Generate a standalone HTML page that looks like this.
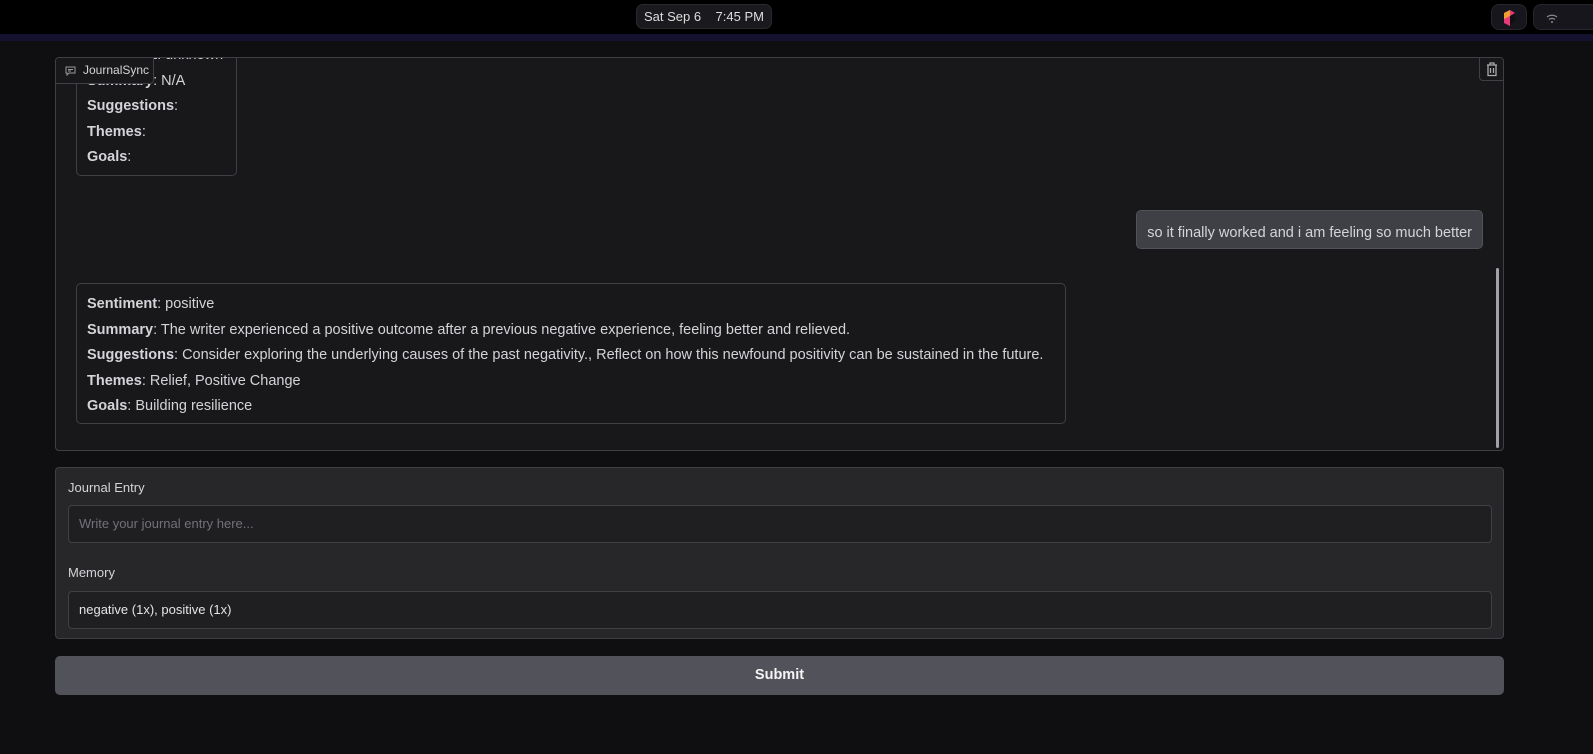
<!DOCTYPE html>
<html><head><style>
*{box-sizing:border-box;margin:0;padding:0}
body{width:1593px;height:754px;background:#0f0f11;font-family:"Liberation Sans",sans-serif;color:#d4d4d8;position:relative;overflow:hidden}
.top{position:absolute;left:0;top:0;width:1593px;height:34px;background:#000}
.strip{position:absolute;left:0;top:34px;width:1593px;height:7px;background:#15122f}
.clock{position:absolute;left:636px;top:4px;width:136px;height:25px;border-radius:7px;background:#1a1a1e;border:1px solid #2a2a2e;color:#ddd;font-size:13px;line-height:23px;text-align:center}
.tb{position:absolute;top:4px;height:26px;border-radius:8px;background:#16161c;border:1px solid #26262c}
.panel{position:absolute;left:55px;top:57px;width:1449px;height:394px;background:#18181b;border:1px solid #3f3f46;border-radius:4px;overflow:hidden}
.label{position:absolute;left:0;top:0;height:26px;width:98px;border-right:1px solid #3f3f46;border-bottom:1px solid #3f3f46;background:#18181b;font-size:12px;line-height:25px;padding-left:27px;color:#d4d4d8;border-bottom-right-radius:4px}
.bot{position:absolute;border:1px solid #3f3f46;border-radius:5px;background:#18181b;padding:0 10px;font-size:14.5px;line-height:25.5px}
.bot b{color:#d4d4d8}
.user{position:absolute;right:20px;top:152px;background:#3f3f46;border:1px solid #52525b;border-radius:5px;padding:0 10px;height:39px;line-height:44px;font-size:14.5px;color:#d4d4d8}
.trash{position:absolute;right:0;top:0;width:24px;height:23px;border-left:1px solid #3f3f46;border-bottom:1px solid #3f3f46;border-bottom-left-radius:4px}
.scroll{position:absolute;right:4px;top:210px;width:3px;height:180px;background:#a1a1aa;border-radius:2px}
.form{position:absolute;left:55px;top:467px;width:1449px;height:172px;background:#27272a;border:1px solid #3f3f46;border-radius:4px}
.fl{position:absolute;left:12px;font-size:13px;color:#d4d4d8}
.inp{position:absolute;left:12px;width:1424px;height:38px;background:#1f1f22;border:1px solid #3f3f46;border-radius:4px;font-size:13px;line-height:36px;padding-left:10px}
.btn{position:absolute;left:55px;top:656px;width:1449px;height:39px;background:#52525b;border-radius:5px;text-align:center;line-height:39px;font-weight:bold;font-size:14.5px;color:#f4f4f5}
</style></head><body>
<div class="top"></div><div class="strip"></div>
<div class="clock">Sat Sep 6&nbsp;&nbsp;&nbsp; 7:45 PM</div>
<div class="tb" style="left:1491px;width:36px"><svg width="36" height="26"><polygon points="12,8 18,5 23,8 23,18 18,21 12,18" fill="#e83a7a"/><polygon points="18,11 23,8 23,18 18,21" fill="#111"/><polygon points="12,8 18,5 18,11 12,14" fill="#f0a030"/></svg></div>
<div class="tb" style="left:1533px;width:70px"><svg width="30" height="26"><path d="M13 12a8 8 0 0 1 10 0M15 14.5a4.5 4.5 0 0 1 6 0" stroke="#888" stroke-width="1.3" fill="none"/><circle cx="18" cy="17" r="1" fill="#888"/></svg></div>
<div class="panel">
<div class="bot" style="left:20px;top:-16px;width:161px;height:134px;padding-top:0">
<div><b>Sentiment</b>: unknown</div><div><b>Summary</b>: N/A</div><div><b>Suggestions</b>:</div><div><b>Themes</b>:</div><div><b>Goals</b>:</div></div>
<div class="label"><svg style="position:absolute;left:9px;top:8px" width="11" height="10"><path d="M1 1h9v6H4l-2 2V7H1z M3 3.5h5M3 5h3" stroke="#999" fill="none" stroke-width="1"/></svg>JournalSync</div>
<div class="trash"><svg width="24" height="23"><path d="M7 7h10M10 7V5h4v2M8 7.5v10h8v-10M10.5 10v5M13.5 10v5" stroke="#aaa" fill="none" stroke-width="1.3"/></svg></div>
<div class="user">so it finally worked and i am feeling so much better</div>
<div class="bot" style="left:20px;top:225px;width:990px;height:141px;padding-top:8px">
<div><b>Sentiment</b>: positive</div>
<div><b>Summary</b>: The writer experienced a positive outcome after a previous negative experience, feeling better and relieved.</div>
<div><b>Suggestions</b>: Consider exploring the underlying causes of the past negativity., Reflect on how this newfound positivity can be sustained in the future.</div>
<div><b>Themes</b>: Relief, Positive Change</div>
<div><b>Goals</b>: Building resilience</div></div>
<div class="scroll"></div>
</div>
<div class="form">
<div class="fl" style="top:12px">Journal Entry</div>
<div class="inp" style="top:37px;color:#71717a">Write your journal entry here...</div>
<div class="fl" style="top:97px">Memory</div>
<div class="inp" style="top:123px;color:#e4e4e7">negative (1x), positive (1x)</div>
</div>
<div class="btn">Submit</div>
</body></html>
